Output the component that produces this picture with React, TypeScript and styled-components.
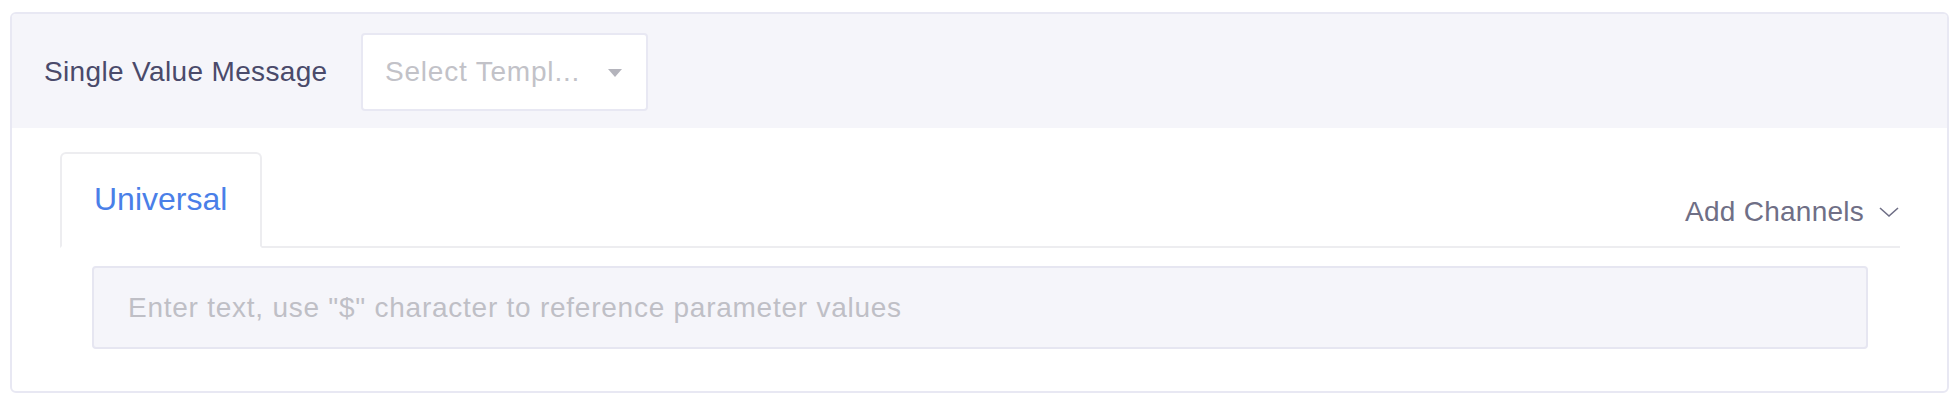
import React from "react";
import styled, { createGlobalStyle } from "styled-components";

const GlobalStyle = createGlobalStyle`
  html, body {
    margin: 0;
    padding: 0;
    background: #ffffff;
    font-family: "Liberation Sans", Arial, sans-serif;
  }
  * { box-sizing: border-box; }
`;

const Page = styled.div`
  padding: 12px 11px 0 10px;
`;

const Card = styled.div`
  height: 381px;
  border: 2px solid #e8e8f3;
  border-radius: 6px;
  overflow: hidden;
  display: flex;
  flex-direction: column;
  background: #ffffff;
`;

const Header = styled.div`
  height: 114px;
  background: #f5f5fa;
  display: flex;
  align-items: center;
  padding: 2px 0 0 32px;
  gap: 32px;
`;

const Label = styled.div`
  flex: 0 0 285px;
  font-size: 28px;
  letter-spacing: 0.35px;
  color: #4a4a6a;
  white-space: nowrap;
`;

const SelectBox = styled.div`
  width: 287px;
  height: 78px;
  background: #ffffff;
  border: 2px solid #e8e8f3;
  border-radius: 4px;
  display: flex;
  align-items: center;
  justify-content: space-between;
  padding: 0 24px 0 22px;
`;

const SelectPlaceholder = styled.span`
  font-size: 28px;
  letter-spacing: 0.8px;
  color: #c2c2c8;
  white-space: nowrap;
`;

const Caret = styled.span`
  width: 0;
  height: 0;
  border-left: 7px solid transparent;
  border-right: 7px solid transparent;
  border-top: 8px solid #b4b4bc;
  margin-top: 2px;
`;

const Body = styled.div`
  flex: 1;
  padding: 24px 47px 0 48px;
`;

const TabBar = styled.div`
  display: flex;
  align-items: flex-end;
  justify-content: space-between;
  border-bottom: 2px solid #ededf0;
  height: 96px;
`;

const Tab = styled.div<{ $active?: boolean }>`
  width: 202px;
  height: 96px;
  margin-bottom: -2px;
  border: 2px solid #ededf0;
  border-bottom: 2px solid #ffffff;
  border-radius: 6px 6px 0 0;
  background: #ffffff;
  display: flex;
  align-items: center;
  padding: 0 0 2px 32px;
  font-size: 32px;
  color: ${(p) => (p.$active ? "#4a7fe8" : "#6f6f86")};
`;

const AddChannels = styled.div`
  display: flex;
  align-items: center;
  gap: 14px;
  font-size: 28px;
  letter-spacing: 0.25px;
  color: #6f6f86;
  padding-bottom: 18px;
`;

const Chevron = styled.svg`
  width: 22px;
  height: 12px;
  display: block;
`;

const TextInput = styled.div`
  margin: 18px 32px 0 32px;
  height: 83px;
  background: #f5f5fa;
  border: 2px solid #e6e6f1;
  border-radius: 4px;
  display: flex;
  align-items: center;
  padding: 0 0 0 34px;
  font-size: 28px;
  letter-spacing: 0.75px;
  color: #bfbfc6;
  white-space: nowrap;
`;

export default function App() {
  return (
    <>
      <GlobalStyle />
      <Page>
        <Card>
          <Header>
            <Label>Single Value Message</Label>
            <SelectBox>
              <SelectPlaceholder>Select Templ...</SelectPlaceholder>
              <Caret />
            </SelectBox>
          </Header>
          <Body>
            <TabBar>
              <Tab $active>Universal</Tab>
              <AddChannels>
                Add Channels
                <Chevron viewBox="0 0 22 12">
                  <path d="M2 2 L11 10 L20 2" fill="none" stroke="#6f6f86" strokeWidth="1.6" />
                </Chevron>
              </AddChannels>
            </TabBar>
            <TextInput>Enter text, use "$" character to reference parameter values</TextInput>
          </Body>
        </Card>
      </Page>
    </>
  );
}
